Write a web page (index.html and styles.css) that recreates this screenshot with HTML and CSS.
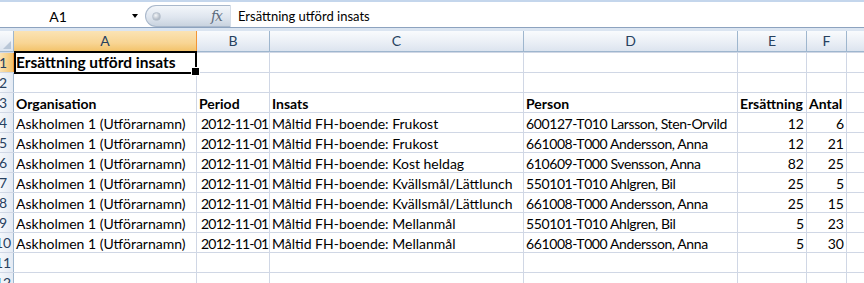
FILE: index.html
```html
<!DOCTYPE html>
<html>
<head>
<meta name="viewport" content="width=device-width, initial-scale=1">
<link rel="stylesheet" href="styles.css">
</head>
<body>

<div class="formulabar">
    <div class="namebox">
        <span class="name">A1</span>
        <span class="arrow"></span>
    </div>
    <div class="pill">
        <span class="dot"></span>
        <span class="fx">fx</span>
    </div>
    <div class="formula">Ersättning utförd insats</div>
</div>

<div class="colheads">
    <div class="corner"></div>
    <div class="ch active">A</div>
    <div class="ch">B</div>
    <div class="ch">C</div>
    <div class="ch">D</div>
    <div class="ch">E</div>
    <div class="ch">F</div>
    <div class="ch"></div>
</div>

<div class="grid">
    <!-- row 1 -->
    <div class="rh active"><span>1</span></div>
    <div class="c title sel">Ersättning utförd insats</div>
    <div class="c"></div><div class="c"></div><div class="c"></div><div class="c"></div><div class="c"></div><div class="c"></div>

    <!-- row 2 -->
    <div class="rh"><span>2</span></div>
    <div class="c"></div><div class="c"></div><div class="c"></div><div class="c"></div><div class="c"></div><div class="c"></div><div class="c"></div>

    <!-- row 3 -->
    <div class="rh"><span>3</span></div>
    <div class="c b">Organisation</div>
    <div class="c b">Period</div>
    <div class="c b">Insats</div>
    <div class="c b">Person</div>
    <div class="c b">Ersättning</div>
    <div class="c b">Antal</div>
    <div class="c"></div>

    <div class="rh"><span>4</span></div>
    <div class="c">Askholmen 1 (Utförarnamn)</div>
    <div class="c date">2012-11-01</div>
    <div class="c">Måltid FH-boende: Frukost</div>
    <div class="c person">600127-T010 Larsson, Sten-Orvild</div>
    <div class="c n">12</div>
    <div class="c n">6</div>
    <div class="c"></div>

    <div class="rh"><span>5</span></div>
    <div class="c">Askholmen 1 (Utförarnamn)</div>
    <div class="c date">2012-11-01</div>
    <div class="c">Måltid FH-boende: Frukost</div>
    <div class="c person">661008-T000 Andersson, Anna</div>
    <div class="c n">12</div>
    <div class="c n">21</div>
    <div class="c"></div>

    <div class="rh"><span>6</span></div>
    <div class="c">Askholmen 1 (Utförarnamn)</div>
    <div class="c date">2012-11-01</div>
    <div class="c">Måltid FH-boende: Kost heldag</div>
    <div class="c person">610609-T000 Svensson, Anna</div>
    <div class="c n">82</div>
    <div class="c n">25</div>
    <div class="c"></div>

    <div class="rh"><span>7</span></div>
    <div class="c">Askholmen 1 (Utförarnamn)</div>
    <div class="c date">2012-11-01</div>
    <div class="c">Måltid FH-boende: Kvällsmål/Lättlunch</div>
    <div class="c person">550101-T010 Ahlgren, Bil</div>
    <div class="c n">25</div>
    <div class="c n">5</div>
    <div class="c"></div>

    <div class="rh"><span>8</span></div>
    <div class="c">Askholmen 1 (Utförarnamn)</div>
    <div class="c date">2012-11-01</div>
    <div class="c">Måltid FH-boende: Kvällsmål/Lättlunch</div>
    <div class="c person">661008-T000 Andersson, Anna</div>
    <div class="c n">25</div>
    <div class="c n">15</div>
    <div class="c"></div>

    <div class="rh"><span>9</span></div>
    <div class="c">Askholmen 1 (Utförarnamn)</div>
    <div class="c date">2012-11-01</div>
    <div class="c">Måltid FH-boende: Mellanmål</div>
    <div class="c person">550101-T010 Ahlgren, Bil</div>
    <div class="c n">5</div>
    <div class="c n">23</div>
    <div class="c"></div>

    <div class="rh"><span>10</span></div>
    <div class="c">Askholmen 1 (Utförarnamn)</div>
    <div class="c date">2012-11-01</div>
    <div class="c">Måltid FH-boende: Mellanmål</div>
    <div class="c person">661008-T000 Andersson, Anna</div>
    <div class="c n">5</div>
    <div class="c n">30</div>
    <div class="c"></div>

    <!-- empty rows -->
    <div class="rh"><span>11</span></div>
    <div class="c"></div><div class="c"></div><div class="c"></div><div class="c"></div><div class="c"></div><div class="c"></div><div class="c"></div>

    <div class="rh"><span>12</span></div>
    <div class="c"></div><div class="c"></div><div class="c"></div><div class="c"></div><div class="c"></div><div class="c"></div><div class="c"></div>
</div>

</body>
</html>
```

FILE: styles.css
```css
* {
    box-sizing: border-box;
}

body {
    margin: 0;
    height: 283px;
    overflow: hidden;
    background: #fff;
    font-family: Lato, "Open Sans", sans-serif;
    font-size: 14px;
    color: #000;
}

/* Formula bar on top */
.formulabar {
    display: flex;
    height: 31px;
    border-top: 2px solid #c4d6ec;
    border-bottom: 3px solid #dbe5f1;
    box-shadow: inset 0 -1px 0 #8da3bf;
    padding-top: 3px;
    padding-bottom: 1px;
}

.namebox {
    width: 145px;
    display: flex;
    align-items: center;
}

.name {
    flex: 1;
    text-align: center;
    padding-right: 30px;
    padding-left: 14px;
}

.arrow {
    width: 0;
    height: 0;
    border-left: 3px solid transparent;
    border-right: 3px solid transparent;
    border-top: 4px solid #000;
    margin-right: 7px;
}

.pill {
    width: 85px;
    display: flex;
    align-items: center;
    justify-content: space-between;
    padding: 0 8px 0 6px;
    border: 1px solid #a9b8cb;
    border-right: none;
    border-radius: 12px 0 0 12px;
    background: linear-gradient(#f3f6fa, #dfe6ef 55%, #c9d3df);
}

.dot {
    width: 9px;
    height: 9px;
    border-radius: 50%;
    background: radial-gradient(circle at 40% 35%, #f4f6f9, #aab4c1 75%);
    border: 1px solid #b9c3cf;
}

.fx {
    font-family: "DejaVu Serif", serif;
    font-style: italic;
    font-size: 14px;
    color: #5d6b7c;
    letter-spacing: -1px;
}

.formula {
    flex: 1;
    padding-left: 7px;
    display: flex;
    align-items: center;
    border-left: 1px solid #d4dde8;
    font-size: 13px;
}

/* Column headers */
.colheads,
.grid {
    display: grid;
    grid-template-columns: 13px 182px 72px 253px 213px 68px 39px 1fr;
    column-gap: 1px;
}

.colheads {
    height: 21px;
    background: #9eb6ce;
    padding-bottom: 1px;
}

.corner,
.ch {
    background: linear-gradient(#f9fbfd, #e9eef5 60%, #dce4ef);
}

.corner {
    position: relative;
}

.corner::after {
    content: '';
    position: absolute;
    right: 2px;
    bottom: 2px;
    border-left: 8px solid transparent;
    border-bottom: 8px solid #b8c6d7;
}

.ch {
    text-align: center;
    line-height: 20px;
    font-size: 14px;
    color: #27415f;
}

.ch.active {
    background: linear-gradient(#fbe3b4, #f8d594 60%, #f3c36b);
    box-shadow: 1px 0 0 #f29536;
}

/* Cell grid */
.grid {
    grid-auto-rows: 19px;
    row-gap: 1px;
    padding-top: 1px;
    background: #d0d7e5;
}

.rh {
    background: linear-gradient(90deg, #f4f7fb, #e4eaf3);
    border-right: 1px solid #9eb6ce;
    margin-right: -1px;
    overflow: hidden;
    font-size: 14px;
    line-height: 19px;
    color: #27415f;
}

.rh span {
    display: block;
    width: 20px;
    margin-left: -7px;
    text-align: center;
}

.rh.active {
    background: linear-gradient(90deg, #fbe3b4, #f3c36b);
    border-right-color: #f29536;
}

.c {
    background: #fff;
    padding: 2px 3px 0 2px;
    line-height: 17px;
    white-space: nowrap;
    overflow: hidden;
}

.b {
    font-weight: bold;
}

.title {
    font-weight: bold;
    font-size: 15.5px;
    padding-top: 1px;
}

.date {
    padding-left: 4px;
    letter-spacing: -0.8px;
}

.person {
    letter-spacing: -0.4px;
}

.n {
    text-align: right;
    padding-right: 2px;
}

/* Selected cell A1 */
.sel {
    position: relative;
    overflow: visible;
    z-index: 2;
}

.sel::after {
    content: '';
    position: absolute;
    left: 0;
    top: -2px;
    right: -1px;
    bottom: -2px;
    border: 2px solid #000;
}

.sel::before {
    content: '';
    position: absolute;
    right: -4px;
    bottom: -4px;
    width: 7px;
    height: 7px;
    background: #000;
    border: 1px solid #fff;
    z-index: 3;
}
```
